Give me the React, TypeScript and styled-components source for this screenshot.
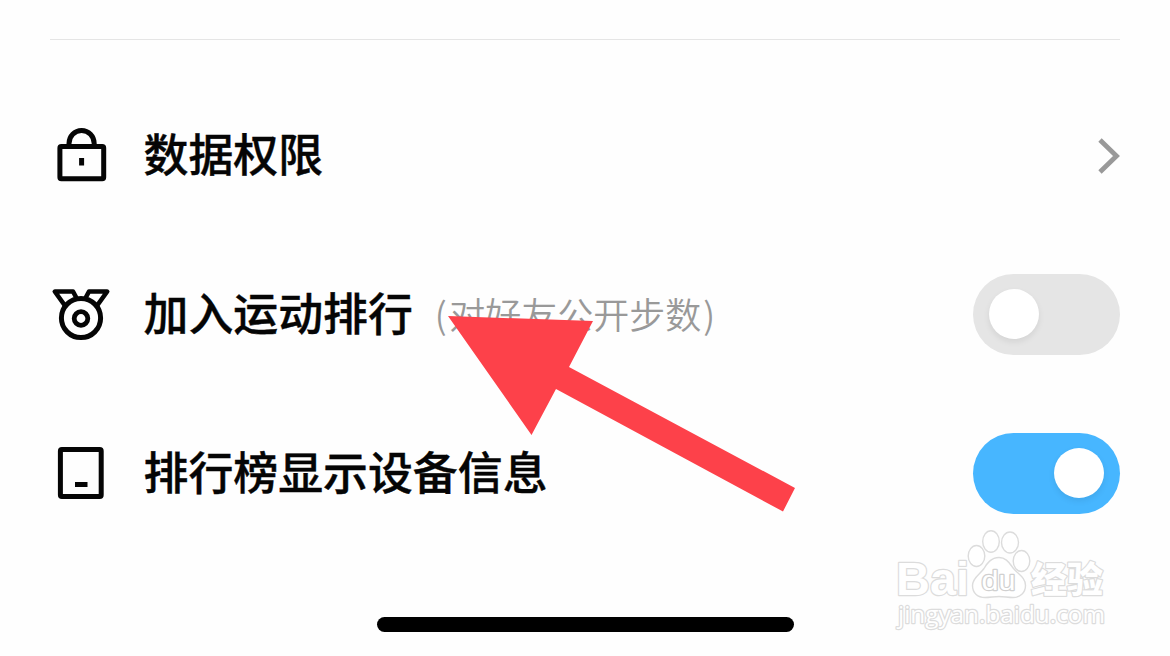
import { useState } from 'react';
import styled, { createGlobalStyle } from 'styled-components';

const GlobalStyle = createGlobalStyle`
  * {
    box-sizing: border-box;
  }
  body {
    margin: 0;
    background-color: #fefefe;
    font-family: 'Noto Sans CJK SC', sans-serif;
  }
`;

const Container = styled.div`
  position: relative;
  display: flex;
  flex-direction: column;
  width: 1170px;
  height: 656px;
  padding: 39px 50px 0;
  overflow: hidden;
`;

const Divider = styled.div`
  height: 1px;
  margin-bottom: 36px;
  background-color: #e5e5e5;
`;

const SettingList = styled.ul`
  margin: 0;
  padding: 0;
  list-style: none;
`;

const Setting = styled.li`
  display: flex;
  align-items: center;
  height: 159px;
`;

const Icon = styled.svg`
  flex: none;
  width: 64px;
  height: 64px;
  margin-right: 29.5px;
  fill: none;
  stroke: #050505;
  stroke-width: 5;
`;

const Label = styled.span`
  padding-bottom: 6px;
  font-size: 44.9px;
  font-weight: 500;
  line-height: 60px;
  white-space: nowrap;
  color: #050505;
  -webkit-text-stroke: 0.4px #050505;
`;

const Hint = styled.span`
  margin-left: 22px;
  padding-bottom: 3px;
  font-size: 36px;
  font-weight: 350;
  line-height: 50px;
  white-space: nowrap;
  color: #999;
`;

const Paren = styled.span`
  &:first-child {
    margin-right: 2.5px;
  }
  &:last-child {
    margin-left: 2px;
  }
`;

const Chevron = styled.svg`
  width: 24px;
  height: 40px;
  margin-left: auto;
  fill: none;
  stroke: #999;
  stroke-width: 4.8;
`;

const Toggle = styled.button<{ $on: boolean }>`
  display: flex;
  align-items: center;
  justify-content: ${(props) => (props.$on ? 'flex-end' : 'flex-start')};
  width: 147px;
  height: 81px;
  margin-left: auto;
  padding: 0 16px 1px;
  border: none;
  border-radius: 41px;
  background-color: ${(props) => (props.$on ? '#47b6ff' : '#e5e5e5')};
`;

const Knob = styled.span`
  width: 50px;
  height: 50px;
  border-radius: 50%;
  background-color: white;
  box-shadow: 0 3px 6px rgba(0, 0, 0, 0.08);
`;

const HomeIndicator = styled.div`
  align-self: center;
  width: 417px;
  height: 15px;
  margin-top: 64px;
  border-radius: 8px;
  background-color: black;
`;

const Arrow = styled.svg`
  position: absolute;
  left: 440px;
  top: 310px;
  width: 360px;
  height: 210px;
  fill: #fd414a;
  pointer-events: none;
`;

const Watermark = styled.svg`
  position: absolute;
  left: 890px;
  top: 524px;
  width: 224px;
  height: 112px;
  fill: white;
  stroke: #dcdcdc;
  stroke-width: 1.4;
  pointer-events: none;
  text {
    paint-order: stroke;
    stroke-width: 2.4;
    stroke-linejoin: round;
  }
`;

function LockIcon() {
  return (
    <Icon viewBox="50 124 64 64">
      <rect x="59.9" y="146.4" width="43.8" height="32.4" rx="1.5" />
      <path d="M69 146v-2.5a12.6 13 0 0 1 25.2 0v2.5" />
      <path d="M81.6 158v7.5" />
    </Icon>
  );
}

function MedalIcon() {
  return (
    <Icon viewBox="50 283 64 64" strokeLinejoin="round">
      <circle cx="81" cy="318" r="19.6" />
      <circle cx="81" cy="318.5" r="6.8" strokeWidth="4.8" />
      <path
        d="M64.5 305L54.8 291.5H73L76.5 298M97.5 305L107.2 291.5H89L85.5 298"
        strokeWidth="4.6"
      />
    </Icon>
  );
}

function TabletIcon() {
  return (
    <Icon viewBox="50 442 64 64">
      <rect x="60.4" y="449.6" width="40.8" height="46.8" rx="1.5" />
      <path d="M75 484.5h12.5" />
    </Icon>
  );
}

function App() {
  const [joined, setJoined] = useState(false);
  const [showDevice, setShowDevice] = useState(true);

  return (
    <Container>
      <GlobalStyle />
      <Divider />
      <SettingList>
        <Setting>
          <LockIcon />
          <Label>数据权限</Label>
          <Chevron viewBox="1096 136 24 40">
            <path d="M1100 140L1116.5 156L1100 172" />
          </Chevron>
        </Setting>
        <Setting>
          <MedalIcon />
          <Label>加入运动排行</Label>
          <Hint>
            <Paren>(</Paren>对好友公开步数<Paren>)</Paren>
          </Hint>
          <Toggle $on={joined} onClick={() => setJoined((prev) => !prev)}>
            <Knob />
          </Toggle>
        </Setting>
        <Setting>
          <TabletIcon />
          <Label>排行榜显示设备信息</Label>
          <Toggle
            $on={showDevice}
            onClick={() => setShowDevice((prev) => !prev)}
          >
            <Knob />
          </Toggle>
        </Setting>
      </SettingList>
      <HomeIndicator />
      <Arrow viewBox="440 310 360 210">
        <path d="M448 316L593 321L569 367L795 488L783 511.5L556 389L531.5 435Z" />
      </Arrow>
      <Watermark viewBox="890 524 224 112">
        <text
          x="896"
          y="595"
          fontFamily="Liberation Sans"
          fontWeight="700"
          fontSize="47"
          textLength="73"
          lengthAdjust="spacingAndGlyphs"
        >
          Bai
        </text>
        <ellipse cx="976.5" cy="556" rx="8.3" ry="10.5" />
        <ellipse cx="991" cy="541.5" rx="8.3" ry="10.8" />
        <ellipse cx="1010" cy="542.5" rx="8.5" ry="10.5" />
        <ellipse cx="1021.5" cy="561" rx="8.3" ry="10.5" />
        <path d="M999 557.5c-8 0-12 6-15 11c-4 6-11.5 9-11.5 17c0 8 5.500 12 12.5 12c5 0 9-1 14-1s9 1 14 1c7 0 12.500-4.500 12.500-12c0-8-7-11-12-17c-4-5-7-11-14.5-11z" />
        <text
          x="981.5"
          y="589.5"
          fontFamily="Liberation Sans"
          fontSize="27"
          stroke="#d0d0d0"
          textLength="34"
          lengthAdjust="spacingAndGlyphs"
        >
          du
        </text>
        <text
          x="1031"
          y="592.5"
          fontFamily="Noto Sans CJK SC"
          fontWeight="900"
          fontSize="36"
        >
          经验
        </text>
        <text
          x="898"
          y="623"
          fontFamily="Open Sans"
          fontSize="23.5"
          fontWeight="500"
          textLength="207"
          lengthAdjust="spacingAndGlyphs"
        >
          jingyan.baidu.com
        </text>
      </Watermark>
    </Container>
  );
}

export default App;
